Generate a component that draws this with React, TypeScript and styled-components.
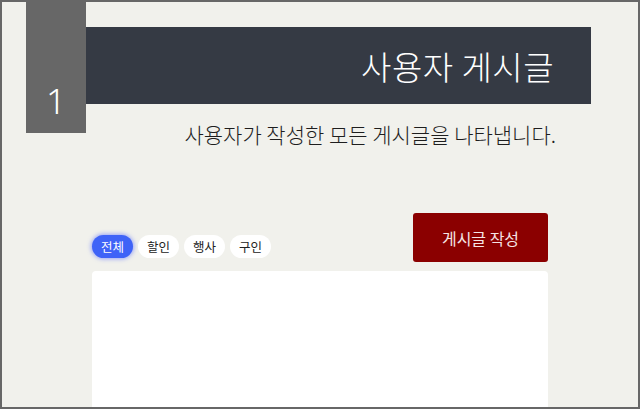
import React, { useState } from "react";
import styled, { createGlobalStyle } from "styled-components";

const GlobalStyle = createGlobalStyle`
  html, body { margin: 0; padding: 0; }
  body { font-family: "Noto Sans CJK KR", "Noto Sans", sans-serif; }
  * { box-sizing: border-box; }
`;

const Frame = styled.div`
  width: 640px;
  height: 409px;
  border: 2px solid #676767;
  background: #f1f1ec;
  overflow: hidden;
  display: flex;
  flex-direction: column;
`;

const Top = styled.header`
  display: flex;
  align-items: flex-start;
  padding-left: 24px;
`;

const NumberBlock = styled.div`
  width: 60px;
  height: 131px;
  background: #676767;
  color: #ffffff;
  display: flex;
  align-items: flex-end;
  justify-content: center;
  padding-bottom: 15px;
  font-family: "Noto Sans", "Liberation Sans", sans-serif;
  font-weight: 300;
  font-size: 35px;
  line-height: 1;
`;

const HeadColumn = styled.div`
  width: 505px;
  margin-top: 25px;
  display: flex;
  flex-direction: column;
`;

const TitleBar = styled.div`
  height: 77px;
  background: #353a44;
  display: flex;
  align-items: center;
  justify-content: flex-end;
  padding-right: 37px;
`;

const Title = styled.h1`
  margin: 0;
  color: #ffffff;
  font-size: 33px;
  font-weight: 300;
  letter-spacing: 0.5px;
`;

const Subtitle = styled.p`
  margin: 17px 0 0;
  text-align: right;
  padding-right: 35px;
  font-size: 21px;
  line-height: 27px;
  font-weight: 300;
  color: #1e1e1e;
`;

const Content = styled.main`
  width: 456px;
  margin: 65px auto 0;
  display: flex;
  flex-direction: column;
  gap: 9px;
`;

const Toolbar = styled.div`
  display: flex;
  justify-content: space-between;
  align-items: flex-end;
`;

const Tabs = styled.div`
  display: flex;
  gap: 5px;
  margin-bottom: 4px;
`;

const Tab = styled.button<{ $active?: boolean }>`
  height: 23px;
  width: 41px;
  padding: 0;
  border: none;
  border-radius: 12px;
  font-family: "Noto Sans CJK KR", "Noto Sans", sans-serif;
  font-size: 12.5px;
  font-weight: 400;
  cursor: pointer;
  background: ${(p) => (p.$active ? "#3f63f7" : "#ffffff")};
  color: ${(p) => (p.$active ? "#ffffff" : "#222222")};
  box-shadow: ${(p) => (p.$active ? "0 0 4px 1px rgba(80,100,255,0.55)" : "none")};
`;

const WriteButton = styled.button`
  width: 135px;
  height: 49px;
  border: none;
  border-radius: 3px;
  background: #8b0000;
  color: #f5e4e4;
  font-family: "Noto Sans CJK KR", "Noto Sans", sans-serif;
  font-size: 16px;
  font-weight: 400;
  cursor: pointer;
`;

const Card = styled.section`
  height: 200px;
  background: #ffffff;
  border-radius: 4px;
`;

const tabs = ["전체", "할인", "행사", "구인"];

export default function App() {
  const [active, setActive] = useState(0);
  return (
    <>
      <GlobalStyle />
      <Frame>
        <Top>
          <NumberBlock>1</NumberBlock>
          <HeadColumn>
            <TitleBar>
              <Title>사용자 게시글</Title>
            </TitleBar>
            <Subtitle>사용자가 작성한 모든 게시글을 나타냅니다.</Subtitle>
          </HeadColumn>
        </Top>
        <Content>
          <Toolbar>
            <Tabs>
              {tabs.map((t, i) => (
                <Tab key={t} $active={i === active} onClick={() => setActive(i)}>
                  {t}
                </Tab>
              ))}
            </Tabs>
            <WriteButton>게시글 작성</WriteButton>
          </Toolbar>
          <Card />
        </Content>
      </Frame>
    </>
  );
}
